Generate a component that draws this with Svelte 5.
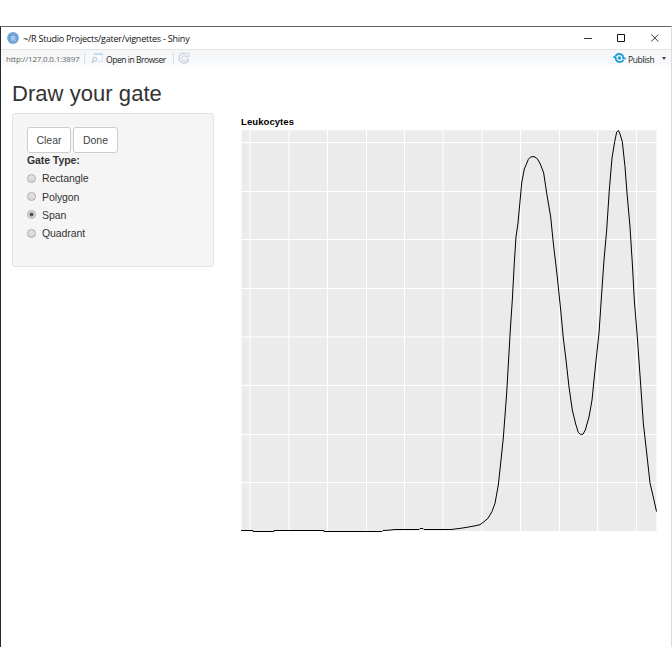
<script>
  const options = ['Rectangle', 'Polygon', 'Span', 'Quadrant'];
  let selected = $state('Span');

  // Grid positions, relative to the plot panel
  const columns = [9, 48, 86.5, 125.5, 163.5, 202, 241, 279.5, 318.5, 356.5, 395.5];
  const rows = [12.5, 61.5, 109.5, 158.5, 207, 255.5, 304.5, 352.5];

  const density = [
    [0, 400.5], [12, 400.5], [12, 401.5], [33, 401.5], [33, 400.5], [83, 400.5], [83, 401.5], [141, 401.5],
    [142, 400.5], [148, 400.2], [154, 399.5], [178, 399.5], [179, 398.5], [182, 398.5], [183, 399.5],
    [210, 399.5], [219, 398.4], [226, 397.3], [233, 396], [239, 394.7], [242, 392.5], [247, 388.3],
    [251, 381.5], [254, 373.3], [257.3, 355], [260, 330], [262.3, 308], [265.7, 263], [269.3, 200],
    [271.3, 170], [273.3, 133], [275, 106.7], [277, 93], [280.7, 53], [283.3, 39], [287.3, 29.5],
    [289.5, 27], [293, 26.5], [296.3, 28.7], [299.3, 34], [302.7, 43], [305.7, 63.3], [309.7, 87],
    [312.3, 113], [316.3, 147], [319.7, 180], [322.3, 208], [325, 230], [328, 257], [331.3, 280],
    [334.7, 294], [337.3, 302.5], [339.5, 304.4], [342, 304.2], [344.3, 300], [348, 287], [351, 270],
    [354, 240], [358, 203], [360.7, 163], [363, 130], [365.7, 100], [368.3, 60], [371, 28], [373.7, 11.7],
    [375.7, 2], [377.5, 0.5], [379, 4], [381.3, 11.7], [384, 36.7], [386, 63], [389, 97], [391.3, 133],
    [393.3, 170], [396.3, 207], [399.7, 255], [402.3, 293], [405.7, 323], [409, 353], [412.3, 367], [415.5, 381.5]
  ];
  const points = density.map((p) => p.join(',')).join(' ');
</script>

<div class="window">
  <header class="titlebar">
    <svg class="logo" width="12" height="12" viewBox="0 0 12 12">
      <circle cx="6" cy="6" r="5.9" fill="#6fa5d8" />
      <text x="6" y="8.7" text-anchor="middle" font-size="7.5" fill="#e5f0fb">R</text>
    </svg>
    <span class="caption">~/R Studio Projects/gater/vignettes - Shiny</span>
    <svg class="controls" width="88" height="16" viewBox="0 0 88 16" fill="none" stroke="#333">
      <path d="M4 8.5h8" />
      <path d="M37.5 4.5h7v7h-7z" stroke="#111" />
      <path d="M71.3 4.5l7 7M78.3 4.5l-7 7" />
    </svg>
  </header>

  <div class="toolbar">
    <span class="url">http://127.0.0.1:3897</span>
    <i class="sep"></i>
    <svg class="open" width="13" height="12" viewBox="0 0 13 12" fill="none">
      <path d="M3 1.5h8.5v8H6" fill="#f7fbff" stroke="#dbe6ef" />
      <path d="M3 2h9" stroke="#c9dcee" stroke-width="2" />
      <circle cx="3.8" cy="7.3" r="1.9" stroke="#b4c2d2" />
      <path d="M.8 11l1.7-2.2" stroke="#a7b7ca" stroke-width="1.2" />
    </svg>
    <span class="openlabel">Open in Browser</span>
    <i class="sep"></i>
    <svg class="reload" width="12" height="12" viewBox="0 0 12 12" fill="none" stroke="#c4cfdb">
      <path d="M9.4 2.2A5 5 0 1 0 10.9 7.6" stroke-width="1.2" />
      <path d="M10.7 0.8v4H6.7" />
      <path d="M8.3 4.6a2.6 2.6 0 1 0 .3 2.9h2.3" />
    </svg>
    <svg class="publish" width="13" height="12" viewBox="0 0 13 12" fill="none" stroke="#199bd9">
      <path d="M2.6 4.3C3.8 1.2 8.4.9 9.9 4.2L10.3 6.4H12.8" stroke-width="1.8" />
      <path d="M.2 5.2h2.2L3 7.6c1.5 3.3 6 3.3 7.3.3" stroke-width="1.8" />
      <circle cx="6.4" cy="6" r="1.7" fill="#199bd9" stroke="none" />
    </svg>
    <span class="publabel">Publish</span>
    <i class="caret"></i>
  </div>

  <main>
    <h1>Draw your gate</h1>
    <div class="layout">
      <section class="well">
        <div class="buttons">
          <button type="button">Clear</button>
          <button type="button">Done</button>
        </div>
        <div class="label">Gate Type:</div>
        {#each options as option}
          <label class="option">
            <input type="radio" name="gate" value={option} bind:group={selected} />
            <span>{option}</span>
          </label>
        {/each}
      </section>

      <section class="plot">
        <h2>Leukocytes</h2>
        <svg width="416" height="403" viewBox="0 0 416 403">
          <rect x="0.5" y="0.3" width="415" height="400.7" fill="#ebebeb" />
          <g stroke="#fff" stroke-width="1">
            {#each columns as x}
              <path d="M{x} 0V401" />
            {/each}
            {#each rows as y}
              <path d="M0 {y}H415.5" />
            {/each}
          </g>
          <polyline {points} fill="none" stroke="#000" stroke-width="1" stroke-linejoin="round" />
        </svg>
      </section>
    </div>
  </main>
</div>

<style>
  :global(body) {
    background: #fff;
  }
  .window {
    box-sizing: border-box;
    width: 672px;
    height: 621px;
    margin-top: 26px;
    border-top: 1px solid #666;
    border-left: 1px solid #292a2e;
    border-right: 1px solid #dcdcdc;
    background: #fff;
    font-family: 'Liberation Sans', Arial, sans-serif;
    color: #333;
    overflow: hidden;
  }
  .titlebar,
  .toolbar {
    display: flex;
    align-items: center;
    font-family: 'Open Sans', 'Noto Sans', sans-serif;
    white-space: nowrap;
  }
  .titlebar {
    height: 22px;
    padding-left: 6px;
    font-size: 9px;
    color: #111;
  }
  .caption {
    margin-left: 4px;
    letter-spacing: -0.22px;
  }
  .controls {
    margin-left: auto;
    margin-right: 3px;
  }
  .toolbar {
    box-sizing: border-box;
    height: 18px;
    border-top: 1px solid #e3e5e7;
    border-bottom: 1px solid #f8f9fa;
    background: linear-gradient(#f3f5f7, #fafbfc);
    padding-left: 5px;
    font-size: 8.5px;
    color: #222;
  }
  .url {
    width: 73px;
    font-size: 8px;
    color: #666;
    letter-spacing: -0.2px;
  }
  .sep {
    width: 1px;
    height: 11px;
    margin-left: 5px;
    background: #d8dde1;
  }
  .open {
    margin-left: 6px;
  }
  .openlabel {
    width: 62px;
    margin-left: 2px;
    padding-top: 2px;
    letter-spacing: -0.45px;
  }
  .reload {
    margin-left: 4px;
  }
  .publish {
    margin-left: auto;
  }
  .publabel {
    width: 28px;
    margin-left: 2px;
    padding-top: 2px;
    letter-spacing: -0.4px;
  }
  .caret {
    margin: 1px 5px 0 6px;
    border: 2.5px solid transparent;
    border-top: 3px solid #444;
    border-bottom: 0;
  }
  main {
    padding: 11px 0 0 11px;
  }
  h1 {
    margin: 0;
    height: 35px;
    font-size: 22px;
    line-height: 31px;
    font-weight: 400;
    letter-spacing: 0.05px;
  }
  .layout {
    display: flex;
    align-items: flex-start;
  }
  .well {
    box-sizing: border-box;
    width: 202px;
    height: 154px;
    padding: 13px 14px;
    border: 1px solid #e3e3e3;
    border-radius: 3px;
    background: #f5f5f5;
    font-size: 10.5px;
  }
  .buttons {
    display: flex;
    gap: 2px;
  }
  button {
    box-sizing: border-box;
    width: 44px;
    height: 26px;
    padding: 0;
    border: 1px solid #ccc;
    border-radius: 3px;
    background: #fff;
    color: #444;
    font: inherit;
  }
  button + button {
    width: 45px;
  }
  .label {
    height: 16px;
    line-height: 14px;
    font-weight: 700;
    letter-spacing: -0.08px;
  }
  .option {
    display: flex;
    align-items: center;
    height: 18.4px;
    letter-spacing: -0.1px;
  }
  input {
    appearance: none;
    box-sizing: border-box;
    width: 9px;
    height: 9px;
    margin: 0 6px 0 0;
    border: 1px solid #acacac;
    border-radius: 50%;
    background: linear-gradient(#e3e3e3, #d7d7d7);
  }
  input:checked {
    background: radial-gradient(circle, #555 0 1.6px, #dedede 2.4px);
  }
  .plot {
    margin-left: 27px;
    padding-top: 1px;
  }
  h2 {
    margin: 0;
    height: 16px;
    line-height: 15px;
    font-size: 9.5px;
    font-weight: 700;
    letter-spacing: 0.08px;
    color: #000;
  }
  .plot svg {
    display: block;
  }
</style>
